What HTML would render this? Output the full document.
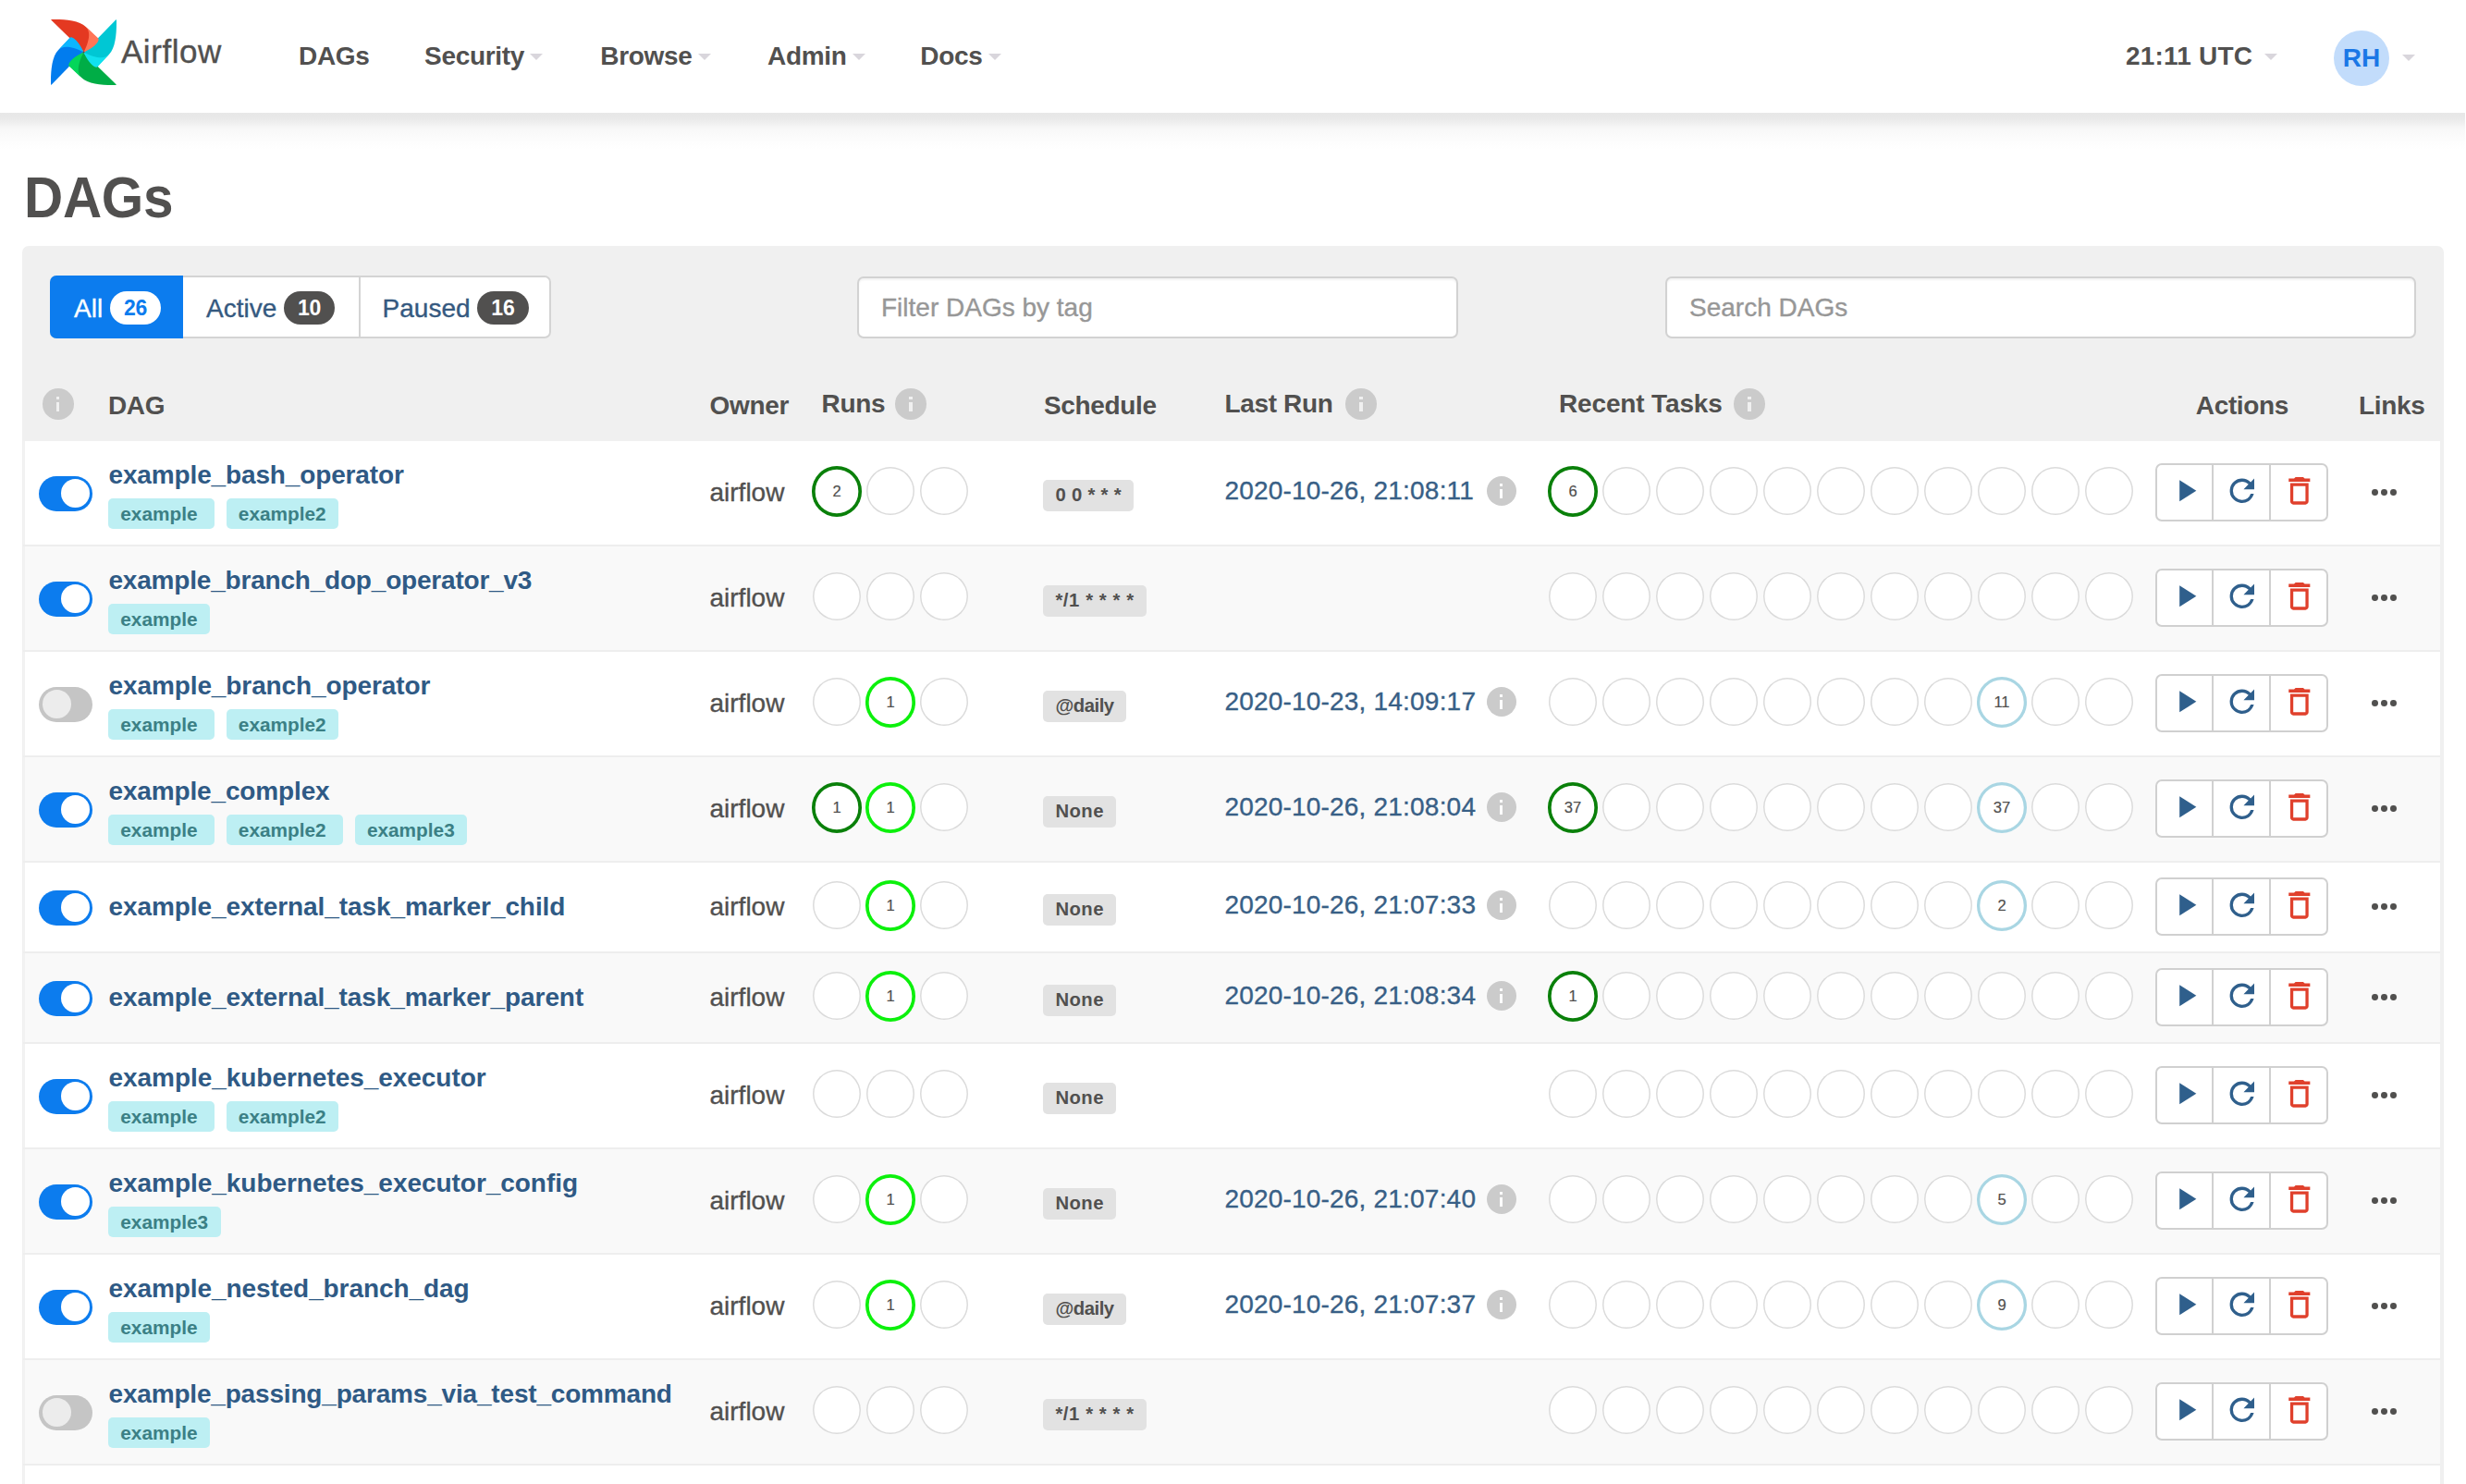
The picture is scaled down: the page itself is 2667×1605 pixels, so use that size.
<!DOCTYPE html>
<html lang="en"><head><meta charset="utf-8"><title>Airflow - DAGs</title>
<style>
*{box-sizing:border-box;margin:0;padding:0}
html,body{width:2667px;height:1605px;overflow:hidden;background:#fff}
body{position:relative;font-family:"Liberation Sans",Arial,Helvetica,sans-serif;font-size:28px;color:#51504f}
a{text-decoration:none;color:inherit}
i,em,s,b{font-style:normal;text-decoration:none;font-weight:inherit}
.nav{position:absolute;left:0;top:0;width:2666px;height:122px;background:#fff;z-index:5}
.nav:after{content:'';position:absolute;left:0;right:0;top:122px;height:40px;background:linear-gradient(to bottom,#e7e7e7 0,#e9e9e9 6px,#eeeeee 10px,#f4f4f4 14px,#f8f8f8 18px,#fbfbfb 25px,#fdfdfd 32px,#ffffff 40px)}
.logo{position:absolute;left:54.5px;top:20.7px;width:71px;height:71px}
.logo svg{display:block}
.brand{position:absolute;left:130.9px;top:35.7px;font-size:35px;line-height:40px;letter-spacing:.58px;color:#51504f;white-space:nowrap}
.ni{position:absolute;top:41.2px;line-height:40px;font-size:28px;font-weight:bold;letter-spacing:-.3px;color:#51504f;white-space:nowrap}
.car{display:inline-block;width:0;height:0;border-left:7px solid transparent;border-right:7px solid transparent;border-top:7px solid #d9d6dc;margin-left:6px;vertical-align:5px}
.av{position:absolute;left:2524px;top:32.5px;width:60px;height:60px;border-radius:50%;background:#c2dcfb;color:#1a77e6;font-weight:bold;font-size:28px;line-height:60px;text-align:center}
h1{position:absolute;left:25.5px;top:172.5px;font-size:62.5px;line-height:80px;font-weight:bold;color:#51504f;letter-spacing:-.3px;transform:scaleX(.935);transform-origin:0 0}
.panel{position:absolute;left:24px;top:266px;width:2619px;height:1400px;background:#f0f0f0;border-radius:7px}
.fb{position:absolute;left:54px;top:298px;height:68px;width:542px;border-radius:7px;background:#fff;border:2px solid #d4d4d4;white-space:nowrap;font-size:28px;color:#35597f}
.fb a{position:absolute;top:-2px;height:68px;line-height:72px;display:block}
.f1{left:-2px;width:143.6px;background:#0c7cee;color:#fff;border-radius:7px 0 0 7px;padding-left:26px}
.f2{left:142.5px;width:191.5px;border-right:2px solid #d4d4d4;padding-left:24.5px}
.f3{left:334px;padding-left:23.6px}
.bd{display:inline-block;height:36px;line-height:36px;border-radius:18px;background:#51504f;color:#fff;font-weight:bold;font-size:23px;padding:0 15px;vertical-align:2.5px;margin-left:0px;letter-spacing:-.2px}
.bd.w{background:#fff;color:#0c7cee}
.inp{position:absolute;top:298.5px;height:67.5px;background:#fff;border:2px solid #d2d2d2;border-radius:7px;font-size:28px;line-height:64px;color:#979797;padding-left:24px;box-shadow:inset 0 2px 2px rgba(0,0,0,.05)}
.th{position:absolute;font-weight:bold;font-size:28px;line-height:40px;letter-spacing:-.35px;white-space:nowrap;color:#51504f}
.info{position:absolute;width:33.5px;height:33.5px;border-radius:50%;background:#cbcbcb;color:transparent;font-size:1px;overflow:hidden}
.info i{display:block}
.info:before{content:'';position:absolute;left:15px;top:8.5px;width:3.4px;height:3.2px;background:#f0f0f0}
.info:after{content:'';position:absolute;left:15px;top:14.5px;width:3.4px;height:10.6px;background:#f0f0f0}
.row .info{width:32px;height:32px}
.row .info:before,.row .info:after{background:#fdfdfd;left:14.5px;width:3px}
.row .info:before{top:8px}
.row .info:after{top:14px;height:10px}
.tbl{position:absolute;left:0;top:0;width:2667px;height:1605px}
.row{position:absolute;left:25px;width:2613.5px;background:#fff;box-shadow:inset 0 -2px #eeeeee,inset 2px 0 #f2f2f2}
.row.alt{background:#f9f9f9}
.row>*{position:absolute}
.tg{left:17px;width:58px;height:38px;border-radius:19px;background:#0c7cee}
.tg b{position:absolute;top:3.5px;left:23.5px;width:31px;height:31px;border-radius:50%;background:#fff}
.tg.off{background:#c5c5c5}
.tg.off b{left:3.5px;background:#ececec}
.dn{left:92.5px;font-weight:bold;font-size:28px;line-height:40px;color:#2f5a85;white-space:nowrap;letter-spacing:-.13px}
.tags{left:92px;height:33px;white-space:nowrap;font-size:0}
.tag{display:inline-block;height:33.4px;line-height:33.4px;padding:0 18.6px 0 13.3px;border-radius:5px;background:#bdeff3;color:#3b8085;font-size:20.8px;font-weight:bold;margin-right:12.4px}
.tag:last-child{padding-right:13.6px}
.ow{left:742.5px;font-size:28px;line-height:40px;white-space:nowrap}
.c{width:52px;height:52px;border-radius:50%;box-shadow:inset 0 0 0 1.5px #dbdbdb;background:#fff;font-size:16.6px;text-align:center;color:#51504f}
.cg,.cl,.cb{width:54.4px;height:54.4px;line-height:56.8px}
.cg{box-shadow:inset 0 0 0 3.7px #0a800a}
.cl{box-shadow:inset 0 0 0 3.7px #0cf00c}
.cb{box-shadow:inset 0 0 0 3.3px #a9d6e3}
.sc{left:1103.4px;height:33.5px;line-height:33.5px;padding:0 13px;border-radius:5px;background:#e2e2e2;color:#51504f;font-size:20.3px;font-weight:bold;white-space:nowrap}
.lr{left:1299.4px;font-size:28px;line-height:40px;color:#385f86;white-space:nowrap;letter-spacing:.2px}
.row .info{left:1582px}
.bg{left:2305.8px;width:186.8px;height:63.4px;border:2px solid #d0d0d0;border-radius:7px;background:#fff;display:flex}
.ab{flex:1;display:flex;align-items:center;justify-content:center;border-left:2px solid #d0d0d0}
.ab:first-child{border-left:0}
.ab svg{display:block;margin-top:-4px;margin-left:2px}
.dots{left:2540.3px;width:27px;height:40px;display:flex;align-items:center;justify-content:space-between}
.dots i{display:block;width:6.8px;height:6.8px;border-radius:50%;background:#51504f}

.ow,.lr,.fb,.inp span,.brand{-webkit-text-stroke:.35px currentColor}
.c{-webkit-text-stroke:.2px currentColor}
.bd{-webkit-text-stroke:0}

</style></head><body>
<nav class="nav"><div class="logo"><svg viewBox="0 0 155.314 155.314" width="71" height="71"><path d="M1.751 154.328l75.065-76.946a1.391 1.391 0 0 0 .167-1.777c-4.565-6.373-12.988-7.478-16.109-11.76-9.246-12.684-11.592-19.863-15.565-19.418a1.226 1.226 0 0 0-.736.383L17.457 72.606C1.857 88.584-.381 123.8.046 153.656a1.006 1.006 0 0 0 1.705.672z" fill="#017cee"/><path d="M154.325 153.564L77.379 78.5a1.389 1.389 0 0 0-1.779-.168c-6.373 4.566-7.478 12.988-11.76 16.109-12.684 9.246-19.863 11.592-19.418 15.565a1.233 1.233 0 0 0 .384.736l27.8 27.116c15.978 15.6 51.192 17.838 81.05 17.411a1.006 1.006 0 0 0 .669-1.705z" fill="#00ad46"/><path d="M72.603 137.858c-8.733-8.52-12.78-25.374 5.055-60.2-28.993 12.958-39.153 28.532-34.157 33.406z" fill="#04d659"/><path d="M153.562.99L78.5 77.935a1.387 1.387 0 0 0-.167 1.777c4.566 6.374 12.987 7.478 16.109 11.76 9.246 12.684 11.593 19.863 15.565 19.418a1.226 1.226 0 0 0 .736-.383l27.116-27.8C153.457 66.73 155.7 31.516 155.268 1.658a1.007 1.007 0 0 0-1.706-.668z" fill="#00c7d4"/><path d="M137.863 82.711c-8.52 8.733-25.374 12.78-60.2-5.055 12.958 28.993 28.532 39.153 33.406 34.157z" fill="#11e1ee"/><path d="M.99 1.751L77.935 76.815a1.389 1.389 0 0 0 1.777.167c6.374-4.565 7.478-12.988 11.76-16.109 12.684-9.246 19.863-11.592 19.418-15.565a1.233 1.233 0 0 0-.383-.736L82.709 17.457C66.73 1.857 31.516-.381 1.658.046A1.006 1.006 0 0 0 .99 1.751z" fill="#e43921"/><path d="M82.716 17.457c8.733 8.52 12.78 25.374-5.055 60.2 28.993-12.958 39.153-28.536 34.154-33.41z" fill="#ff7557"/><path d="M17.457 72.6c8.52-8.733 25.374-12.78 60.2 5.055C64.7 48.665 49.126 38.505 44.252 43.5z" fill="#0cb6ff"/><circle cx="77.657" cy="77.657" r="2.363" fill="#4a4848"/></svg>
</div><span class="brand">Airflow</span><a class="ni" style="left:323px">DAGs</a><a class="ni" style="left:459px">Security<s class=car></s></a><a class="ni" style="left:649.3px">Browse<s class=car></s></a><a class="ni" style="left:830px">Admin<s class=car></s></a><a class="ni" style="left:995.3px">Docs<s class=car></s></a><a class="ni" style="left:2299px;letter-spacing:.2px">21:11 UTC<s class="car" style="margin-left:13px"></s></a><span class="av">RH</span><s class="car" style="position:absolute;left:2591.5px;top:59px"></s></nav><h1>DAGs</h1><div class="panel"></div><div class="fb"><a class="f1">All <em class="bd w">26</em></a><a class="f2">Active <em class="bd">10</em></a><a class="f3">Paused <em class="bd">16</em></a></div><div class="inp" style="left:927px;width:650px"><span>Filter DAGs by tag</span></div><div class="inp" style="left:1801px;width:812px"><span>Search DAGs</span></div><span class="th" style="left:117px;top:419px">DAG</span><span class="th" style="left:767.6px;top:419px">Owner</span><span class="th" style="left:888.6px;top:417px">Runs</span><span class="th" style="left:1129px;top:419px">Schedule</span><span class="th" style="left:1324.5px;top:417px">Last Run</span><span class="th" style="left:1686px;top:417px;letter-spacing:-.15px">Recent Tasks</span><span class="th" style="left:2374.8px;top:419px">Actions</span><span class="th" style="left:2551px;top:419px">Links</span><span class="info" style="left:46px;top:420.4px"><i>i</i></span><span class="info" style="left:968.4px;top:420.4px"><i>i</i></span><span class="info" style="left:1455.2px;top:420.4px"><i>i</i></span><span class="info" style="left:1875.4px;top:420.4px"><i>i</i></span><div class="tbl"><div class="row" style="top:476.5px;height:114.0px"><span class="tg on" style="top:38.0px"><b></b></span><a class="dn" style="top:17.2px;letter-spacing:-0.14px">example_bash_operator</a><div class="tags" style="top:62.5px"><span class="tag">example</span><span class="tag">example2</span></div><span class="ow" style="top:36.0px">airflow</span><span class="c cg" style="left:852.8px;top:27.7px">2</span><span class="c" style="left:912px;top:28.9px"></span><span class="c" style="left:970px;top:28.9px"></span><span class="sc" style="top:42.5px;letter-spacing:0.3px">0 0 * * *</span><a class="lr" style="top:34.3px">2020-10-26, 21:08:11</a><span class="info" style="left:1582.5px;top:38.1px"><i>i</i></span><span class="c cg" style="left:1648.8px;top:27.7px">6</span><span class="c" style="left:1708px;top:28.9px"></span><span class="c" style="left:1766px;top:28.9px"></span><span class="c" style="left:1824px;top:28.9px"></span><span class="c" style="left:1882px;top:28.9px"></span><span class="c" style="left:1940px;top:28.9px"></span><span class="c" style="left:1998px;top:28.9px"></span><span class="c" style="left:2056px;top:28.9px"></span><span class="c" style="left:2114px;top:28.9px"></span><span class="c" style="left:2172px;top:28.9px"></span><span class="c" style="left:2230px;top:28.9px"></span><div class="bg" style="top:24.5px"><span class="ab"><svg viewBox="0 0 24 24" width="39.6" height="39.6"><path d="M8 5v14l11-7z" fill="#2f5f8c"/></svg></span><span class="ab"><svg viewBox="0 0 24 24" width="39.6" height="39.6"><path d="M17.65 6.35A7.958 7.958 0 0 0 12 4a8 8 0 1 0 7.73 10h-2.08A5.99 5.99 0 0 1 12 18a6 6 0 1 1 0-12c1.66 0 3.14.69 4.22 1.78L13 11h7V4l-2.35 2.35z" fill="#2f5f8c"/></svg></span><span class="ab"><svg viewBox="0 0 24 24" width="39.6" height="39.6"><path d="M16 9v10H8V9h8m-1.5-6h-5l-1 1H5v2h14V4h-3.500l-1-1zM18 7H6v12c0 1.1.9 2 2 2h8c1.1 0 2-.9 2-2V7z" fill="#e0402c"/></svg></span></div><span class="dots" style="top:35.9px"><i></i><i></i><i></i></span></div><div class="row alt" style="top:590.5px;height:114.0px"><span class="tg on" style="top:38.0px"><b></b></span><a class="dn" style="top:17.2px;letter-spacing:-0.2px">example_branch_dop_operator_v3</a><div class="tags" style="top:62.5px"><span class="tag">example</span></div><span class="ow" style="top:36.0px">airflow</span><span class="c" style="left:854px;top:28.9px"></span><span class="c" style="left:912px;top:28.9px"></span><span class="c" style="left:970px;top:28.9px"></span><span class="sc" style="top:42.5px;letter-spacing:0.58px">*/1 * * * *</span><span class="c" style="left:1650px;top:28.9px"></span><span class="c" style="left:1708px;top:28.9px"></span><span class="c" style="left:1766px;top:28.9px"></span><span class="c" style="left:1824px;top:28.9px"></span><span class="c" style="left:1882px;top:28.9px"></span><span class="c" style="left:1940px;top:28.9px"></span><span class="c" style="left:1998px;top:28.9px"></span><span class="c" style="left:2056px;top:28.9px"></span><span class="c" style="left:2114px;top:28.9px"></span><span class="c" style="left:2172px;top:28.9px"></span><span class="c" style="left:2230px;top:28.9px"></span><div class="bg" style="top:24.5px"><span class="ab"><svg viewBox="0 0 24 24" width="39.6" height="39.6"><path d="M8 5v14l11-7z" fill="#2f5f8c"/></svg></span><span class="ab"><svg viewBox="0 0 24 24" width="39.6" height="39.6"><path d="M17.65 6.35A7.958 7.958 0 0 0 12 4a8 8 0 1 0 7.73 10h-2.08A5.99 5.99 0 0 1 12 18a6 6 0 1 1 0-12c1.66 0 3.14.69 4.22 1.78L13 11h7V4l-2.35 2.35z" fill="#2f5f8c"/></svg></span><span class="ab"><svg viewBox="0 0 24 24" width="39.6" height="39.6"><path d="M16 9v10H8V9h8m-1.5-6h-5l-1 1H5v2h14V4h-3.500l-1-1zM18 7H6v12c0 1.1.9 2 2 2h8c1.1 0 2-.9 2-2V7z" fill="#e0402c"/></svg></span></div><span class="dots" style="top:35.9px"><i></i><i></i><i></i></span></div><div class="row" style="top:704.5px;height:114.0px"><span class="tg off" style="top:38.0px"><b></b></span><a class="dn" style="top:17.2px;letter-spacing:-0.1px">example_branch_operator</a><div class="tags" style="top:62.5px"><span class="tag">example</span><span class="tag">example2</span></div><span class="ow" style="top:36.0px">airflow</span><span class="c" style="left:854px;top:28.9px"></span><span class="c cl" style="left:910.8px;top:27.7px">1</span><span class="c" style="left:970px;top:28.9px"></span><span class="sc" style="top:42.5px;letter-spacing:-0.45px">@daily</span><a class="lr" style="top:34.3px">2020-10-23, 14:09:17</a><span class="info" style="left:1582.5px;top:38.1px"><i>i</i></span><span class="c" style="left:1650px;top:28.9px"></span><span class="c" style="left:1708px;top:28.9px"></span><span class="c" style="left:1766px;top:28.9px"></span><span class="c" style="left:1824px;top:28.9px"></span><span class="c" style="left:1882px;top:28.9px"></span><span class="c" style="left:1940px;top:28.9px"></span><span class="c" style="left:1998px;top:28.9px"></span><span class="c" style="left:2056px;top:28.9px"></span><span class="c cb" style="left:2112.8px;top:27.7px">11</span><span class="c" style="left:2172px;top:28.9px"></span><span class="c" style="left:2230px;top:28.9px"></span><div class="bg" style="top:24.5px"><span class="ab"><svg viewBox="0 0 24 24" width="39.6" height="39.6"><path d="M8 5v14l11-7z" fill="#2f5f8c"/></svg></span><span class="ab"><svg viewBox="0 0 24 24" width="39.6" height="39.6"><path d="M17.65 6.35A7.958 7.958 0 0 0 12 4a8 8 0 1 0 7.73 10h-2.08A5.99 5.99 0 0 1 12 18a6 6 0 1 1 0-12c1.66 0 3.14.69 4.22 1.78L13 11h7V4l-2.35 2.35z" fill="#2f5f8c"/></svg></span><span class="ab"><svg viewBox="0 0 24 24" width="39.6" height="39.6"><path d="M16 9v10H8V9h8m-1.5-6h-5l-1 1H5v2h14V4h-3.500l-1-1zM18 7H6v12c0 1.1.9 2 2 2h8c1.1 0 2-.9 2-2V7z" fill="#e0402c"/></svg></span></div><span class="dots" style="top:35.9px"><i></i><i></i><i></i></span></div><div class="row alt" style="top:818.5px;height:114.0px"><span class="tg on" style="top:38.0px"><b></b></span><a class="dn" style="top:17.2px;letter-spacing:-0.15px">example_complex</a><div class="tags" style="top:62.5px"><span class="tag">example</span><span class="tag">example2</span><span class="tag">example3</span></div><span class="ow" style="top:36.0px">airflow</span><span class="c cg" style="left:852.8px;top:27.7px">1</span><span class="c cl" style="left:910.8px;top:27.7px">1</span><span class="c" style="left:970px;top:28.9px"></span><span class="sc" style="top:42.5px;letter-spacing:0.45px">None</span><a class="lr" style="top:34.3px">2020-10-26, 21:08:04</a><span class="info" style="left:1582.5px;top:38.1px"><i>i</i></span><span class="c cg" style="left:1648.8px;top:27.7px">37</span><span class="c" style="left:1708px;top:28.9px"></span><span class="c" style="left:1766px;top:28.9px"></span><span class="c" style="left:1824px;top:28.9px"></span><span class="c" style="left:1882px;top:28.9px"></span><span class="c" style="left:1940px;top:28.9px"></span><span class="c" style="left:1998px;top:28.9px"></span><span class="c" style="left:2056px;top:28.9px"></span><span class="c cb" style="left:2112.8px;top:27.7px">37</span><span class="c" style="left:2172px;top:28.9px"></span><span class="c" style="left:2230px;top:28.9px"></span><div class="bg" style="top:24.5px"><span class="ab"><svg viewBox="0 0 24 24" width="39.6" height="39.6"><path d="M8 5v14l11-7z" fill="#2f5f8c"/></svg></span><span class="ab"><svg viewBox="0 0 24 24" width="39.6" height="39.6"><path d="M17.65 6.35A7.958 7.958 0 0 0 12 4a8 8 0 1 0 7.73 10h-2.08A5.99 5.99 0 0 1 12 18a6 6 0 1 1 0-12c1.66 0 3.14.69 4.22 1.78L13 11h7V4l-2.35 2.35z" fill="#2f5f8c"/></svg></span><span class="ab"><svg viewBox="0 0 24 24" width="39.6" height="39.6"><path d="M16 9v10H8V9h8m-1.5-6h-5l-1 1H5v2h14V4h-3.500l-1-1zM18 7H6v12c0 1.1.9 2 2 2h8c1.1 0 2-.9 2-2V7z" fill="#e0402c"/></svg></span></div><span class="dots" style="top:35.9px"><i></i><i></i><i></i></span></div><div class="row" style="top:932.5px;height:98.0px"><span class="tg on" style="top:30.0px"><b></b></span><a class="dn" style="top:28.0px;letter-spacing:-0.08px">example_external_task_marker_child</a><span class="ow" style="top:28.0px">airflow</span><span class="c" style="left:854px;top:20.9px"></span><span class="c cl" style="left:910.8px;top:19.7px">1</span><span class="c" style="left:970px;top:20.9px"></span><span class="sc" style="top:34.5px;letter-spacing:0.45px">None</span><a class="lr" style="top:26.3px">2020-10-26, 21:07:33</a><span class="info" style="left:1582.5px;top:30.1px"><i>i</i></span><span class="c" style="left:1650px;top:20.9px"></span><span class="c" style="left:1708px;top:20.9px"></span><span class="c" style="left:1766px;top:20.9px"></span><span class="c" style="left:1824px;top:20.9px"></span><span class="c" style="left:1882px;top:20.9px"></span><span class="c" style="left:1940px;top:20.9px"></span><span class="c" style="left:1998px;top:20.9px"></span><span class="c" style="left:2056px;top:20.9px"></span><span class="c cb" style="left:2112.8px;top:19.7px">2</span><span class="c" style="left:2172px;top:20.9px"></span><span class="c" style="left:2230px;top:20.9px"></span><div class="bg" style="top:16.5px"><span class="ab"><svg viewBox="0 0 24 24" width="39.6" height="39.6"><path d="M8 5v14l11-7z" fill="#2f5f8c"/></svg></span><span class="ab"><svg viewBox="0 0 24 24" width="39.6" height="39.6"><path d="M17.65 6.35A7.958 7.958 0 0 0 12 4a8 8 0 1 0 7.73 10h-2.08A5.99 5.99 0 0 1 12 18a6 6 0 1 1 0-12c1.66 0 3.14.69 4.22 1.78L13 11h7V4l-2.35 2.35z" fill="#2f5f8c"/></svg></span><span class="ab"><svg viewBox="0 0 24 24" width="39.6" height="39.6"><path d="M16 9v10H8V9h8m-1.5-6h-5l-1 1H5v2h14V4h-3.500l-1-1zM18 7H6v12c0 1.1.9 2 2 2h8c1.1 0 2-.9 2-2V7z" fill="#e0402c"/></svg></span></div><span class="dots" style="top:27.9px"><i></i><i></i><i></i></span></div><div class="row alt" style="top:1030.5px;height:98.0px"><span class="tg on" style="top:30.0px"><b></b></span><a class="dn" style="top:28.0px;letter-spacing:-0.09px">example_external_task_marker_parent</a><span class="ow" style="top:28.0px">airflow</span><span class="c" style="left:854px;top:20.9px"></span><span class="c cl" style="left:910.8px;top:19.7px">1</span><span class="c" style="left:970px;top:20.9px"></span><span class="sc" style="top:34.5px;letter-spacing:0.45px">None</span><a class="lr" style="top:26.3px">2020-10-26, 21:08:34</a><span class="info" style="left:1582.5px;top:30.1px"><i>i</i></span><span class="c cg" style="left:1648.8px;top:19.7px">1</span><span class="c" style="left:1708px;top:20.9px"></span><span class="c" style="left:1766px;top:20.9px"></span><span class="c" style="left:1824px;top:20.9px"></span><span class="c" style="left:1882px;top:20.9px"></span><span class="c" style="left:1940px;top:20.9px"></span><span class="c" style="left:1998px;top:20.9px"></span><span class="c" style="left:2056px;top:20.9px"></span><span class="c" style="left:2114px;top:20.9px"></span><span class="c" style="left:2172px;top:20.9px"></span><span class="c" style="left:2230px;top:20.9px"></span><div class="bg" style="top:16.5px"><span class="ab"><svg viewBox="0 0 24 24" width="39.6" height="39.6"><path d="M8 5v14l11-7z" fill="#2f5f8c"/></svg></span><span class="ab"><svg viewBox="0 0 24 24" width="39.6" height="39.6"><path d="M17.65 6.35A7.958 7.958 0 0 0 12 4a8 8 0 1 0 7.73 10h-2.08A5.99 5.99 0 0 1 12 18a6 6 0 1 1 0-12c1.66 0 3.14.69 4.22 1.78L13 11h7V4l-2.35 2.35z" fill="#2f5f8c"/></svg></span><span class="ab"><svg viewBox="0 0 24 24" width="39.6" height="39.6"><path d="M16 9v10H8V9h8m-1.5-6h-5l-1 1H5v2h14V4h-3.500l-1-1zM18 7H6v12c0 1.1.9 2 2 2h8c1.1 0 2-.9 2-2V7z" fill="#e0402c"/></svg></span></div><span class="dots" style="top:27.9px"><i></i><i></i><i></i></span></div><div class="row" style="top:1128.5px;height:114.0px"><span class="tg on" style="top:38.0px"><b></b></span><a class="dn" style="top:17.2px;letter-spacing:-0.045px">example_kubernetes_executor</a><div class="tags" style="top:62.5px"><span class="tag">example</span><span class="tag">example2</span></div><span class="ow" style="top:36.0px">airflow</span><span class="c" style="left:854px;top:28.9px"></span><span class="c" style="left:912px;top:28.9px"></span><span class="c" style="left:970px;top:28.9px"></span><span class="sc" style="top:42.5px;letter-spacing:0.45px">None</span><span class="c" style="left:1650px;top:28.9px"></span><span class="c" style="left:1708px;top:28.9px"></span><span class="c" style="left:1766px;top:28.9px"></span><span class="c" style="left:1824px;top:28.9px"></span><span class="c" style="left:1882px;top:28.9px"></span><span class="c" style="left:1940px;top:28.9px"></span><span class="c" style="left:1998px;top:28.9px"></span><span class="c" style="left:2056px;top:28.9px"></span><span class="c" style="left:2114px;top:28.9px"></span><span class="c" style="left:2172px;top:28.9px"></span><span class="c" style="left:2230px;top:28.9px"></span><div class="bg" style="top:24.5px"><span class="ab"><svg viewBox="0 0 24 24" width="39.6" height="39.6"><path d="M8 5v14l11-7z" fill="#2f5f8c"/></svg></span><span class="ab"><svg viewBox="0 0 24 24" width="39.6" height="39.6"><path d="M17.65 6.35A7.958 7.958 0 0 0 12 4a8 8 0 1 0 7.73 10h-2.08A5.99 5.99 0 0 1 12 18a6 6 0 1 1 0-12c1.66 0 3.14.69 4.22 1.78L13 11h7V4l-2.35 2.35z" fill="#2f5f8c"/></svg></span><span class="ab"><svg viewBox="0 0 24 24" width="39.6" height="39.6"><path d="M16 9v10H8V9h8m-1.5-6h-5l-1 1H5v2h14V4h-3.500l-1-1zM18 7H6v12c0 1.1.9 2 2 2h8c1.1 0 2-.9 2-2V7z" fill="#e0402c"/></svg></span></div><span class="dots" style="top:35.9px"><i></i><i></i><i></i></span></div><div class="row alt" style="top:1242.5px;height:114.0px"><span class="tg on" style="top:38.0px"><b></b></span><a class="dn" style="top:17.2px;letter-spacing:-0.04px">example_kubernetes_executor_config</a><div class="tags" style="top:62.5px"><span class="tag">example3</span></div><span class="ow" style="top:36.0px">airflow</span><span class="c" style="left:854px;top:28.9px"></span><span class="c cl" style="left:910.8px;top:27.7px">1</span><span class="c" style="left:970px;top:28.9px"></span><span class="sc" style="top:42.5px;letter-spacing:0.45px">None</span><a class="lr" style="top:34.3px">2020-10-26, 21:07:40</a><span class="info" style="left:1582.5px;top:38.1px"><i>i</i></span><span class="c" style="left:1650px;top:28.9px"></span><span class="c" style="left:1708px;top:28.9px"></span><span class="c" style="left:1766px;top:28.9px"></span><span class="c" style="left:1824px;top:28.9px"></span><span class="c" style="left:1882px;top:28.9px"></span><span class="c" style="left:1940px;top:28.9px"></span><span class="c" style="left:1998px;top:28.9px"></span><span class="c" style="left:2056px;top:28.9px"></span><span class="c cb" style="left:2112.8px;top:27.7px">5</span><span class="c" style="left:2172px;top:28.9px"></span><span class="c" style="left:2230px;top:28.9px"></span><div class="bg" style="top:24.5px"><span class="ab"><svg viewBox="0 0 24 24" width="39.6" height="39.6"><path d="M8 5v14l11-7z" fill="#2f5f8c"/></svg></span><span class="ab"><svg viewBox="0 0 24 24" width="39.6" height="39.6"><path d="M17.65 6.35A7.958 7.958 0 0 0 12 4a8 8 0 1 0 7.73 10h-2.08A5.99 5.99 0 0 1 12 18a6 6 0 1 1 0-12c1.66 0 3.14.69 4.22 1.78L13 11h7V4l-2.35 2.35z" fill="#2f5f8c"/></svg></span><span class="ab"><svg viewBox="0 0 24 24" width="39.6" height="39.6"><path d="M16 9v10H8V9h8m-1.5-6h-5l-1 1H5v2h14V4h-3.500l-1-1zM18 7H6v12c0 1.1.9 2 2 2h8c1.1 0 2-.9 2-2V7z" fill="#e0402c"/></svg></span></div><span class="dots" style="top:35.9px"><i></i><i></i><i></i></span></div><div class="row" style="top:1356.5px;height:114.0px"><span class="tg on" style="top:38.0px"><b></b></span><a class="dn" style="top:17.2px;letter-spacing:-0.09px">example_nested_branch_dag</a><div class="tags" style="top:62.5px"><span class="tag">example</span></div><span class="ow" style="top:36.0px">airflow</span><span class="c" style="left:854px;top:28.9px"></span><span class="c cl" style="left:910.8px;top:27.7px">1</span><span class="c" style="left:970px;top:28.9px"></span><span class="sc" style="top:42.5px;letter-spacing:-0.45px">@daily</span><a class="lr" style="top:34.3px">2020-10-26, 21:07:37</a><span class="info" style="left:1582.5px;top:38.1px"><i>i</i></span><span class="c" style="left:1650px;top:28.9px"></span><span class="c" style="left:1708px;top:28.9px"></span><span class="c" style="left:1766px;top:28.9px"></span><span class="c" style="left:1824px;top:28.9px"></span><span class="c" style="left:1882px;top:28.9px"></span><span class="c" style="left:1940px;top:28.9px"></span><span class="c" style="left:1998px;top:28.9px"></span><span class="c" style="left:2056px;top:28.9px"></span><span class="c cb" style="left:2112.8px;top:27.7px">9</span><span class="c" style="left:2172px;top:28.9px"></span><span class="c" style="left:2230px;top:28.9px"></span><div class="bg" style="top:24.5px"><span class="ab"><svg viewBox="0 0 24 24" width="39.6" height="39.6"><path d="M8 5v14l11-7z" fill="#2f5f8c"/></svg></span><span class="ab"><svg viewBox="0 0 24 24" width="39.6" height="39.6"><path d="M17.65 6.35A7.958 7.958 0 0 0 12 4a8 8 0 1 0 7.73 10h-2.08A5.99 5.99 0 0 1 12 18a6 6 0 1 1 0-12c1.66 0 3.14.69 4.22 1.78L13 11h7V4l-2.35 2.35z" fill="#2f5f8c"/></svg></span><span class="ab"><svg viewBox="0 0 24 24" width="39.6" height="39.6"><path d="M16 9v10H8V9h8m-1.5-6h-5l-1 1H5v2h14V4h-3.500l-1-1zM18 7H6v12c0 1.1.9 2 2 2h8c1.1 0 2-.9 2-2V7z" fill="#e0402c"/></svg></span></div><span class="dots" style="top:35.9px"><i></i><i></i><i></i></span></div><div class="row alt" style="top:1470.5px;height:114.0px"><span class="tg off" style="top:38.0px"><b></b></span><a class="dn" style="top:17.2px;letter-spacing:-0.18px">example_passing_params_via_test_command</a><div class="tags" style="top:62.5px"><span class="tag">example</span></div><span class="ow" style="top:36.0px">airflow</span><span class="c" style="left:854px;top:28.9px"></span><span class="c" style="left:912px;top:28.9px"></span><span class="c" style="left:970px;top:28.9px"></span><span class="sc" style="top:42.5px;letter-spacing:0.58px">*/1 * * * *</span><span class="c" style="left:1650px;top:28.9px"></span><span class="c" style="left:1708px;top:28.9px"></span><span class="c" style="left:1766px;top:28.9px"></span><span class="c" style="left:1824px;top:28.9px"></span><span class="c" style="left:1882px;top:28.9px"></span><span class="c" style="left:1940px;top:28.9px"></span><span class="c" style="left:1998px;top:28.9px"></span><span class="c" style="left:2056px;top:28.9px"></span><span class="c" style="left:2114px;top:28.9px"></span><span class="c" style="left:2172px;top:28.9px"></span><span class="c" style="left:2230px;top:28.9px"></span><div class="bg" style="top:24.5px"><span class="ab"><svg viewBox="0 0 24 24" width="39.6" height="39.6"><path d="M8 5v14l11-7z" fill="#2f5f8c"/></svg></span><span class="ab"><svg viewBox="0 0 24 24" width="39.6" height="39.6"><path d="M17.65 6.35A7.958 7.958 0 0 0 12 4a8 8 0 1 0 7.73 10h-2.08A5.99 5.99 0 0 1 12 18a6 6 0 1 1 0-12c1.66 0 3.14.69 4.22 1.78L13 11h7V4l-2.35 2.35z" fill="#2f5f8c"/></svg></span><span class="ab"><svg viewBox="0 0 24 24" width="39.6" height="39.6"><path d="M16 9v10H8V9h8m-1.5-6h-5l-1 1H5v2h14V4h-3.500l-1-1zM18 7H6v12c0 1.1.9 2 2 2h8c1.1 0 2-.9 2-2V7z" fill="#e0402c"/></svg></span></div><span class="dots" style="top:35.9px"><i></i><i></i><i></i></span></div><div class="row" style="top:1584.5px;height:60px"></div></div>
</body></html>
